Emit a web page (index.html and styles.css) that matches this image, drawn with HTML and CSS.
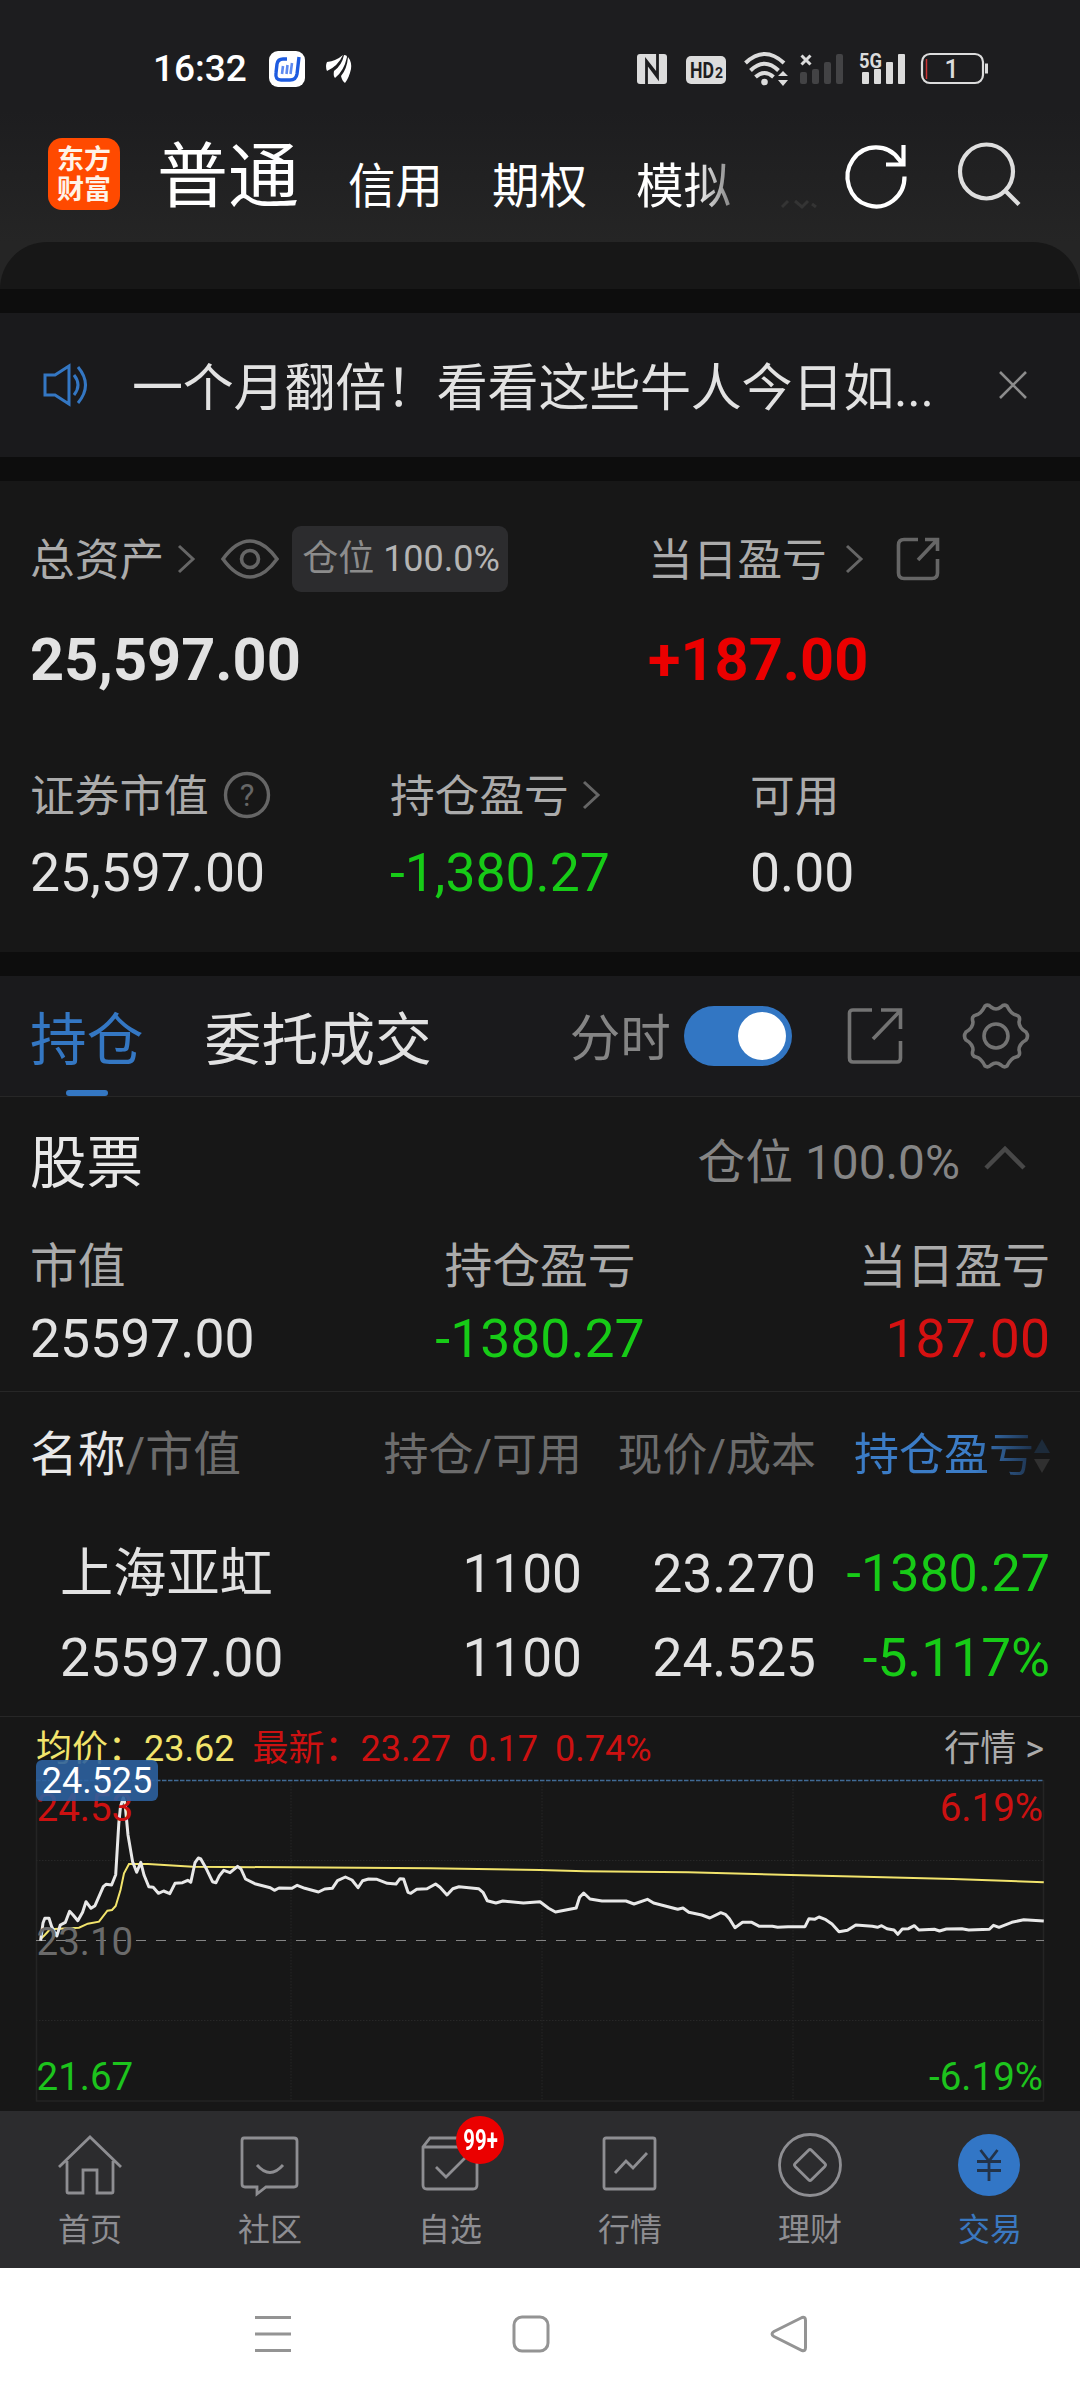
FILE: index.html
```html
<!DOCTYPE html>
<html lang="zh-CN">
<head>
    <meta charset="UTF-8">
    <meta name="viewport" content="width=device-width, initial-scale=1.0">
    <title>交易 - 持仓</title>
    <link rel="stylesheet" href="styles.css">
</head>
<body>
    <header class="top">
        <div class="status-bar">
            <span class="time">16:32</span>
            <svg class="app-icon" width="36" height="36" viewBox="0 0 36 36">
                <rect width="36" height="36" rx="9" fill="#fff"/>
                <path d="M18 8h-4q-5 0-6 5l-1 9q-1 7 5 7h9q6 0 7-6l2-17" fill="none" stroke="#1d5be0" stroke-width="3.4"/>
                <path d="M14 15l-1 8M18.500 14l-1 9M23 12l-1.500 11" stroke="#5d8af0" stroke-width="2.600"/>
            </svg>
            <svg class="feather-icon" width="26" height="30" viewBox="0 0 26 30" fill="#fff">
                <path d="M1 8Q10 7 17 1Q12 12 1 17Q-1 12 1 8Z"/>
                <path d="M18 1Q21 1 21 3Q18 17 9 24Q7 22 8 17Q16 11 18 1Z"/>
                <path d="M22 3Q26 8 25 15Q23 24 19 29Q16 27 15 22Q21 15 22 3Z"/>
            </svg>
            <div class="status-icons">
                <svg width="30" height="34" viewBox="0 0 30 34">
                    <rect y="3" width="30" height="30" rx="3" fill="#dcdcdc"/>
                    <path d="M9.500 33V10l11 14M20.500 3v23l-9-12" fill="none" stroke="#1d1d1f" stroke-width="2.800"/>
                </svg>
                <svg class="hd" width="40" height="34" viewBox="0 0 40 34">
                    <rect y="5" width="40" height="28" rx="5" fill="#dcdcdc"/>
                    <text x="4" y="27" font-size="22" font-weight="700" textLength="24" lengthAdjust="spacingAndGlyphs" fill="#1d1d1f">HD</text>
                    <text x="29" y="27" font-size="14" font-weight="700" fill="#1d1d1f">2</text>
                </svg>
                <svg class="wifi" width="45" height="36" viewBox="0 0 45 36" fill="none" stroke="#dcdcdc" stroke-width="4">
                    <path d="M1.500 12Q20.500-6 40 12M6.500 19.500Q20.500 6 34.500 19.500M11.500 26Q20.500 18 29.500 26"/>
                    <circle cx="20.500" cy="31" r="3.300" fill="#dcdcdc" stroke="none"/>
                    <path d="M34 25l5-5 5 5zM34 29h10l-5 6z" fill="#dcdcdc" stroke="none"/>
                </svg>
                <svg class="signal" width="43" height="34" viewBox="0 0 43 34">
                    <path d="M1.500 4.500l9 9M10.500 4.500l-9 9" stroke="#dcdcdc" stroke-width="3"/>
                    <g fill="#434345"><rect y="21" width="7" height="12" rx="2"/><rect x="12" y="18" width="7" height="15" rx="2"/><rect x="24" y="11" width="7" height="22" rx="2"/><rect x="36" y="3" width="7" height="30" rx="2"/></g>
                </svg>
                <svg class="signal-5g" width="47" height="34" viewBox="0 0 47 34" fill="#dcdcdc">
                    <text x="0" y="16.500" font-size="21" font-weight="700" textLength="23" lengthAdjust="spacingAndGlyphs">5G</text>
                    <rect x="3" y="21" width="7" height="12" rx="1"/><rect x="15" y="18" width="7" height="15" rx="1"/><rect x="27" y="11" width="7" height="22" rx="1"/><rect x="39" y="3" width="7" height="30" rx="1"/>
                </svg>
                <svg class="battery" width="68" height="34" viewBox="0 0 68 34">
                    <rect x="1" y="3" width="61" height="29" rx="8" fill="none" stroke="#dcdcdc" stroke-width="2.200"/>
                    <path d="M5.500 8v20" stroke="#c33" stroke-width="1.500"/>
                    <path d="M65.500 12.500v10" stroke="#dcdcdc" stroke-width="3"/>
                    <text x="30.500" y="27" font-size="25" font-weight="500" text-anchor="middle" fill="#dcdcdc">1</text>
                </svg>
            </div>
        </div>
        <nav class="account-nav">
            <div class="logo"><span>东方</span><span>财富</span></div>
            <div class="account-tabs">
                <span class="current">普通</span>
                <span>信用</span>
                <span>期权</span>
                <span class="fading">模拟</span>
                <svg width="36" height="8" viewBox="0 0 36 8" fill="none" stroke="#343434" stroke-width="3"><path d="M1 7l6-6M14 1l7 6 6-6M31 4l4 3"/></svg>
            </div>
            <svg class="refresh" width="64" height="66" viewBox="0 0 64 66" fill="none" stroke="#fff" stroke-width="4.200">
                <path d="M59.500 34.500A28.500 29.500 0 1 1 54 17.500L58 22M58.500 3v19.500H41"/>
            </svg>
            <svg class="search" width="64" height="66" viewBox="0 0 64 66" fill="none" stroke="#dedede" stroke-width="4.200">
                <ellipse cx="29.500" cy="30.500" rx="26.500" ry="27"/>
                <path d="M48 49.500l14 14"/>
            </svg>
        </nav>
    </header>
    <div class="sheet-top"><div class="sheet"></div></div>

    <section class="notice">
        <svg width="50" height="44" viewBox="0 0 50 44" fill="none" stroke="#3477c3" stroke-width="3">
            <path d="M2 12h10L26 3v38L12 32H2zM31 12q8 10 0 20M35 4q15 18 0 36"/>
        </svg>
        <p>一个月翻倍！看看这些牛人今日如...</p>
        <svg class="close" width="28" height="28" viewBox="0 0 28 28" stroke="#8c8c8c" stroke-width="2.600"><path d="M1 1l26 26M27 1L1 27"/></svg>
    </section>

    <section class="assets">
        <div class="asset-main">
            <div class="total">
                <div class="label"><span>总资产</span>
                    <svg class="arrow" width="18" height="30" viewBox="0 0 18 30"><path d="M2 2l14 13L2 28"/></svg>
                    <svg class="eye" width="58" height="40" viewBox="0 0 58 40"><path d="M2 20Q15 2 29 2T56 20Q43 38 29 38T2 20Z"/><circle cx="29" cy="20" r="8.500"/></svg>
                    <div class="position-tag">仓位 <b>100.0%</b></div>
                </div>
                <div class="big">25,597.00</div>
            </div>
            <div class="today">
                <div class="label"><span>当日盈亏</span>
                    <svg class="arrow" width="18" height="30" viewBox="0 0 18 30"><path d="M2 2l14 13L2 28"/></svg>
                    <svg class="share" width="44" height="44" viewBox="0 0 44 44"><path d="M22 2.500H8q-5.500 0-5.500 5.500v28q0 5.500 5.500 5.500h28q5.500 0 5.500-5.500V22M29 2.500h12.500V14M41 3L22 23"/></svg>
                </div>
                <div class="big red">+187.00</div>
            </div>
        </div>
        <div class="asset-detail">
            <div>
                <div class="label"><span>证券市值</span>
                    <svg class="help" width="48" height="48" viewBox="0 0 48 48"><circle cx="24" cy="24" r="21.500"/><text x="24" y="35" font-size="31" text-anchor="middle">?</text></svg>
                </div>
                <div class="value">25,597.00</div>
            </div>
            <div>
                <div class="label"><span>持仓盈亏</span>
                    <svg class="arrow" width="18" height="30" viewBox="0 0 18 30"><path d="M2 2l14 13L2 28"/></svg>
                </div>
                <div class="value green">-1,380.27</div>
            </div>
            <div>
                <div class="label"><span>可用</span></div>
                <div class="value">0.00</div>
            </div>
        </div>
    </section>

    <section class="tab-bar">
        <span class="tab active">持仓</span>
        <span class="tab">委托成交</span>
        <span class="switch-label">分时</span>
        <span class="switch"></span>
        <svg class="export" width="56" height="58" viewBox="0 0 56 58"><path d="M25 3H6Q2.500 3 2.500 6v45q0 4 3.500 4h44q3.500 0 3.500-4V34M34 3h19.500v19M53 4L26 32"/></svg>
        <svg class="gear" width="68" height="66" viewBox="0 0 68 66"><path d="M14 12Q19 11 23 3Q26 1 29 4Q34 8 39 4Q42 1 45 3Q49 11 54 12Q59 13 57 19Q57 25 64 29Q67 33 64 37Q57 41 57 47Q59 53 54 54Q49 55 45 63Q42 65 39 62Q34 58 29 62Q26 65 23 63Q19 55 14 54Q9 53 11 47Q11 41 4 37Q1 33 4 29Q11 25 11 19Q9 13 14 12Z"/><circle cx="34" cy="33" r="12"/></svg>
    </section>

    <section class="stocks">
        <div class="stock-title">
            <h2>股票</h2>
            <span>仓位 100.0%</span>
            <svg width="42" height="24" viewBox="0 0 42 24"><path d="M2 22L21 3l19 19"/></svg>
        </div>
        <div class="summary">
            <div><span>市值</span><strong>25597.00</strong></div>
            <div><span>持仓盈亏</span><strong class="green">-1380.27</strong></div>
            <div><span>当日盈亏</span><strong class="dark-red">187.00</strong></div>
        </div>
    </section>

    <section class="holdings">
        <div class="row head">
            <span class="name"><em>名称</em>/市值</span>
            <span>持仓/可用</span>
            <span>现价/成本</span>
            <span class="sorted">持仓盈亏<svg width="16" height="38" viewBox="0 0 16 38"><path d="M8 2l8 14H0z" fill="#1d2b3a"/><path d="M8 36l8-14H0z" fill="#303030"/></svg></span>
        </div>
        <div class="row">
            <span class="name">上海亚虹</span>
            <span>1100</span>
            <span>23.270</span>
            <span class="profit green">-1380.27</span>
        </div>
        <div class="row">
            <span class="name">25597.00</span>
            <span>1100</span>
            <span>24.525</span>
            <span class="green">-5.117%</span>
        </div>
    </section>

    <section class="trend">
        <div class="trend-info">
            <span class="avg">均价：</span><span class="avg num">23.62</span>
            <span class="latest">最新：</span><span class="latest num">23.27</span>
            <span class="latest change">0.17</span>
            <span class="latest change">0.74%</span>
            <span class="quote">行情 &gt;</span>
        </div>
        <!-- intraday chart, x runs 36..1044, y runs 80..401 -->
        <svg class="chart" width="1080" height="337" viewBox="0 74 1080 337" fill="none">
            <path d="M36.500 80V401H1043.500V80" stroke="#242424" stroke-width="1.500"/>
            <path d="M36 160.500H1044M36 320.500H1044M291 80V401M542 80V401M793 80V401" stroke="#272727" stroke-dasharray="1.500 1.500"/>
            <path d="M36 80.500H1044" stroke="#416b96" stroke-width="1.400" stroke-dasharray="4.500 1.500"/>
            <path d="M36 240.500H1044" stroke="#858585" stroke-width="1.200" stroke-dasharray="10 10"/>
            <polyline stroke="#f2e46c" stroke-width="2" points="40.6,239 44.8,235 50,229.3 79,227.7 87.8,223.7 99,221.7 107.4,210.7 112,210 115.7,206 120.5,190 124,173.3 129,164 148,164 192.800,166.7 430,168.3 540,170 584.8,171.3 688,172.3 791,175 884,177.3 953,179 1043.800,182.3"/>
            <polyline stroke="#e8e8e8" stroke-width="3" stroke-linejoin="round" points="40.6,240.7 43,223 44.8,218.3 49,218.3 51.7,226.7 54.4,232 56.8,236 60.3,225 65.4,222.3 69.6,211.3 73.3,215.3 77.8,220.7 82.6,212.3 86,201.7 91,208.3 95,205.7 103.3,186.7 106,184.3 111.6,185 115.7,174.7 118.8,123.3 120.5,106.7 123.3,97.7 125,103 128,135 132.6,161.7 136.7,172.3 140.8,162.3 144,175 148.8,186.7 153.2,187.3 158.4,193.3 163.6,191 169.8,193.7 175,183.3 182.5,182.7 187.7,180.3 190.8,182.3 195,162.7 198.3,158 200.8,159 206.6,169.3 212.5,181.7 216,182.7 219.4,175.7 223.8,170.3 230,172.7 237.6,166.3 241,169 245.5,179 254.8,183.7 270.3,187.7 274.4,190.3 279,188 292,188.3 297.2,185.3 304.8,188.3 318.5,192 324.7,189 332.3,188.3 337.5,180.7 345.4,177 352,180 358,187.7 362.6,180.7 368.5,179 377,179.3 387.4,183.3 396,184 400,178.7 403.6,179 408,192.3 410.8,193.3 416.7,189.3 427,188.7 435.6,184 440,187.3 447,195 452.8,188.7 459,186.7 478.6,188.7 483,192.3 487.3,200.7 495.9,203 502.8,201 523.4,203 540,201.7 548.6,208.3 555.5,212 576.2,208 579.6,197.3 583.7,193 590,199 602,201 626,201 634,204 647.4,199.3 653.6,203 677.7,209.3 683,208 688.8,212.3 701.8,215 709.8,218 720.8,212.7 725.3,214.3 729.4,218.7 735,227.7 742.5,222.3 751.8,222.3 759.4,226.3 772.4,226.3 777.6,227.3 788,226.7 805,226.7 809,218.7 814.5,219.3 819,217 825.8,219.7 832,224 839,231.7 847.5,230.3 855.8,225 872.3,226.3 877.5,227.3 881.6,225.7 887,228.7 894,230 897.8,234.3 902.3,229 908.5,228.7 914.3,225.7 918.8,230 934.3,229.3 939.5,231 946.3,229 961.8,228.7 968.7,230 989.4,229.3 993.5,225.3 999,227.3 1011.8,222.3 1023.8,219.7 1043.8,221"/>
            <g font-size="38.500">
                <text x="36.500" y="121" fill="#cc1111">24.53</text>
                <text x="1043" y="121" fill="#cc1111" text-anchor="end">6.19%</text>
                <text x="36.500" y="255" fill="#6b6b6b">23.10</text>
                <text x="36.500" y="390" fill="#1dc41d">21.67</text>
                <text x="1043" y="390" fill="#1dc41d" text-anchor="end">-6.19%</text>
            </g>
        </svg>
        <span class="cost-tag">24.525</span>
    </section>

    <nav class="bottom-nav">
        <a>
            <svg viewBox="0 0 64 64"><path d="M1 34L32 4l31 30M9 28v31q0 1 1 1h15V37h14v23h15q1 0 1-1V28"/></svg>
            首页
        </a>
        <a>
            <svg viewBox="0 0 64 64"><path d="M6 5h50q3 0 3 3v43q0 3-3 3H28l-9 7v-7H7q-3 0-3-3V8q0-3 2-3zM19 32q13 15 26 0"/></svg>
            社区
        </a>
        <a>
            <svg viewBox="0 0 64 64"><path d="M12 5h40l7 9v38q0 4-4 4H9q-4 0-4-4V14zM5 14h54M18 34l10 10 21-21"/></svg>
            自选
            <span class="badge"><i>99+</i></span>
        </a>
        <a>
            <svg viewBox="0 0 64 64"><rect x="6" y="5" width="51" height="51" rx="2"/><path d="M17 40l11-12 7 7 14-15"/></svg>
            行情
        </a>
        <a>
            <svg viewBox="0 0 64 64"><circle cx="32" cy="32" r="30.500"/><rect x="20.500" y="20.500" width="23" height="23" rx="2" transform="rotate(45 32 32)"/></svg>
            理财
        </a>
        <a class="active">
            <svg viewBox="0 0 64 64"><circle cx="31" cy="32" r="31" fill="#3276c6" stroke="none"/><path d="M22.500 17L31 28l8.500-11M31 27v21M19 28.500h24M19 37.500h24" stroke="#233349"/></svg>
            交易
        </a>
    </nav>
    <footer class="system-nav">
        <svg width="38" height="38" viewBox="0 0 38 38"><path d="M1 2.500h36M1 19h36M1 35.500h36"/></svg>
        <svg width="38" height="38" viewBox="0 0 38 38"><rect x="2" y="2" width="34" height="34" rx="8"/></svg>
        <svg width="38" height="38" viewBox="0 0 38 38"><path d="M32 2.500L4 16.500q-4 2.500 0 5l28 14q3.500 1 3.500-3v-27q0-4-3.500-3z"/></svg>
    </footer>
</body>
</html>
```
FILE: styles.css
```css
* {
    margin: 0;
    padding: 0;
    box-sizing: border-box;
}

body {
    width: 1080px;
    height: 2400px;
    overflow: hidden;
    font-family: Roboto, 'Noto Sans CJK SC', sans-serif;
    background: #171717;
    color: #e2e2e2;
}

svg {
    display: block;
    flex-shrink: 0;
    overflow: visible;
}

.green {
    color: #17cb17;
}

.red {
    color: #eb0000;
}

.dark-red {
    color: #d51111;
}

/* status bar + account switcher */
.top {
    height: 242px;
    background: linear-gradient(#1d1d1f 110px, #252525);
}

.status-bar {
    height: 110px;
    padding: 50px 91px 0 153px;
    display: flex;
    align-items: flex-start;
}

.time {
    width: 94px;
    font-size: 37px;
    line-height: 38px;
    font-weight: 500;
    color: #fff;
}

.app-icon {
    margin: 1px 0 0 22px;
}

.feather-icon {
    margin: 4px 0 0 21px;
}

.status-icons {
    margin-left: auto;
    display: flex;
    align-items: flex-start;
    padding-top: 1px;
}

.hd {
    margin-left: 19px;
}

.wifi {
    margin-left: 18px;
}

.signal {
    margin-left: 11px;
}

.signal-5g {
    margin-left: 16px;
}

.battery {
    margin-left: 15px;
}

.account-nav {
    height: 132px;
    padding-left: 48px;
    display: flex;
}

.logo {
    width: 72px;
    height: 72px;
    margin-top: 28px;
    padding-top: 5px;
    border-radius: 14px;
    background: #ff4a00;
    color: #fff3e8;
    font-family: 'Noto Sans CJK SC', sans-serif;
    font-size: 27px;
    font-weight: 700;
    line-height: 30px;
    text-align: center;
}

.logo span {
    display: block;
}

.account-tabs {
    width: 725px;
    padding-left: 37px;
    display: flex;
    align-items: flex-start;
    font-size: 47.500px;
    line-height: 60px;
    color: #fff;
}

.account-tabs span {
    margin: 47px 0 0 49px;
}

.account-tabs .current {
    margin: 27px 0 0;
    font-size: 71px;
    line-height: 80px;
}

.account-tabs .fading {
    -webkit-mask-image: linear-gradient(90deg, #000 60%, rgba(0, 0, 0, .45));
    mask-image: linear-gradient(90deg, #000 60%, rgba(0, 0, 0, .45));
}

.account-tabs svg {
    margin: 90px 0 0 50px;
}

.refresh {
    margin-top: 32px;
}

.search {
    margin: 31px 0 0 48px;
}

.sheet-top {
    background: #252525;
}

.sheet {
    height: 47px;
    border-radius: 48px 48px 0 0;
    background: #171717;
}

.notice {
    height: 192px;
    padding-left: 43px;
    border: solid #0d0d0d;
    border-width: 24px 0;
    background: #1a1a1c;
    display: flex;
    align-items: center;
}

.notice p {
    width: 867px;
    margin-left: 39px;
    padding-top: 8px;
    font-size: 51px;
    line-height: 70px;
    letter-spacing: -.2px;
}

/* asset overview */
.assets {
    height: 471px;
    padding-left: 30px;
}

.label {
    height: 66px;
    display: flex;
    align-items: center;
    font-size: 44.700px;
    line-height: 66px;
    color: #ababab;
}

.label span {
    padding-top: 4px;
}

.label svg {
    fill: none;
    stroke: #666;
    stroke-width: 3;
}

.label .arrow {
    margin-left: 13px;
    stroke-width: 3;
}

.label .eye {
    margin-left: 26px;
    stroke-width: 3.600;
}

.position-tag {
    width: 216px;
    height: 66px;
    margin-left: 13px;
    padding-left: 2px;
    border-radius: 9px;
    background: #2c2c2e;
    color: #8c8c8c;
    font-size: 36px;
    text-align: center;
    white-space: nowrap;
}

.position-tag b {
    font-weight: 400;
    color: #b4b4b4;
}

.today .arrow {
    margin-left: 18px;
}

.label .share {
    margin-left: 33px;
    stroke-width: 3.600;
}

.asset-main {
    padding-top: 45px;
    display: flex;
}

.total {
    width: 618px;
}

.big {
    margin-top: 33px;
    font-size: 59.500px;
    font-weight: 700;
    line-height: 70px;
}

.asset-detail {
    margin-top: 67px;
    display: grid;
    grid-template-columns: 360px 360px 1fr;
}

.label .help {
    margin-left: 14px;
    stroke-width: 3.400;
}

.help text {
    fill: #666;
    stroke: none;
}

.value {
    margin-top: 13px;
    font-size: 53.500px;
    line-height: 64px;
}

/* positions */
.tab-bar {
    height: 145px;
    padding-left: 30px;
    border-top: 24px solid #0d0d0d;
    border-bottom: 1px solid #272727;
    background: #1a1a1c;
    display: flex;
    align-items: center;
    font-size: 56.800px;
}

.tab {
    height: 120px;
    margin-right: 61px;
    line-height: 129px;
}

.tab.active {
    position: relative;
    color: #3477c3;
}

.tab.active::after {
    content: "";
    position: absolute;
    left: 36px;
    bottom: 0;
    width: 42px;
    height: 6px;
    border-radius: 3px;
    background: #3477c3;
}

.switch-label {
    margin-left: 77px;
    padding-top: 4px;
    font-size: 50.500px;
    line-height: 125px;
    color: #858585;
}

.switch {
    width: 108px;
    height: 60px;
    margin-left: 13px;
    padding: 6px;
    border-radius: 30px;
    background: #3276c3;
}

.switch::after {
    content: "";
    display: block;
    width: 48px;
    height: 48px;
    margin-left: auto;
    border-radius: 50%;
    background: #fff;
}

.tab-bar svg {
    fill: none;
    stroke: #737373;
    stroke-width: 3.600;
}

.export {
    margin-left: 55px;
}

.gear {
    margin-left: 59px;
}

.stocks {
    height: 295px;
    border-bottom: 1px solid #272727;
}

.stock-title {
    height: 120px;
    padding: 2px 54px 0 30px;
    display: flex;
    align-items: center;
    font-size: 47.800px;
    color: #858585;
}

.stock-title h2 {
    margin-right: auto;
    font-size: 56.500px;
    font-weight: 400;
    color: #e8e8e8;
}

.stock-title svg {
    margin-left: 24px;
    fill: none;
    stroke: #484848;
    stroke-width: 4.500;
}

.summary {
    padding: 18px 30px 0;
    display: grid;
    grid-template-columns: 1fr 1fr 1fr;
    text-align: center;
}

.summary div:first-child {
    text-align: left;
}

.summary div:last-child {
    text-align: right;
}

.summary span {
    display: block;
    font-size: 47.800px;
    line-height: 64px;
    color: #ababab;
}

.summary strong {
    display: block;
    margin-top: 8px;
    font-size: 53.500px;
    font-weight: 400;
    line-height: 64px;
}

.holdings {
    height: 325px;
    border-bottom: 1px solid #272727;
}

.row {
    height: 84px;
    padding: 0 30px 0 60px;
    display: grid;
    grid-template-columns: 291px 231px 234px 1fr;
    font-size: 53.200px;
    line-height: 86px;
    text-align: right;
    white-space: nowrap;
}

.row .name {
    text-align: left;
}

.row .profit {
    font-size: 52px;
}

.head {
    height: 139px;
    padding-left: 30px;
    grid-template-columns: 321px 231px 234px 1fr;
    font-size: 45px;
    line-height: 128px;
    color: #6c6c6c;
}

.head .name {
    font-size: 47.800px;
    line-height: 126px;
}

.head em {
    font-style: normal;
    color: #e8e8e8;
}

.head .sorted {
    display: flex;
    align-items: center;
    height: 128px;
    justify-content: flex-end;
    color: #3477c3;
    background: linear-gradient(90deg, #3b7cc6 68%, #1d3048 93%);
    -webkit-background-clip: text;
    background-clip: text;
    -webkit-text-fill-color: transparent;
}

/* intraday trend */
.trend {
    position: relative;
    height: 394px;
}

.trend-info {
    height: 57px;
    padding: 2px 36px 0 36px;
    display: flex;
    font-size: 36px;
    line-height: 60px;
}

.avg {
    color: #f2e46c;
}

.latest {
    color: #cc1111;
}

.avg + .latest {
    margin-left: 18px;
}

.change {
    margin-left: 17px;
}

.quote {
    margin-left: auto;
    color: #ababab;
}

.cost-tag {
    position: absolute;
    left: 36px;
    top: 43px;
    width: 122px;
    height: 41px;
    border-radius: 6px;
    background: rgba(44, 97, 158, .9);
    color: #fff;
    font-size: 36px;
    line-height: 42px;
    text-align: center;
}

.bottom-nav {
    height: 157px;
    background: #2c2c2e;
    display: grid;
    grid-template-columns: repeat(6, 1fr);
}

.bottom-nav a {
    position: relative;
    padding-top: 22px;
    color: #8e8e92;
    font-size: 32px;
    line-height: 40px;
    text-align: center;
}

.bottom-nav svg {
    width: 64px;
    height: 64px;
    margin: 0 auto 13px;
    fill: none;
    stroke: #8e8e92;
    stroke-width: 2.800;
}

.bottom-nav .active {
    color: #3a78c0;
}

.badge {
    position: absolute;
    left: 96px;
    top: 5px;
    width: 48px;
    height: 48px;
    border-radius: 50%;
    background: #eb0000;
    color: #fff;
    display: flex;
    align-items: center;
    justify-content: center;
}

.badge i {
    margin-left: 2px;
    font-size: 29px;
    font-style: normal;
    font-weight: 700;
    transform: scaleX(.7);
}

.system-nav {
    height: 132px;
    padding: 0 272px 0 254px;
    background: #fff;
    display: flex;
    align-items: center;
    justify-content: space-between;
}

.system-nav svg {
    fill: none;
    stroke: #949494;
    stroke-width: 3;
}
```
